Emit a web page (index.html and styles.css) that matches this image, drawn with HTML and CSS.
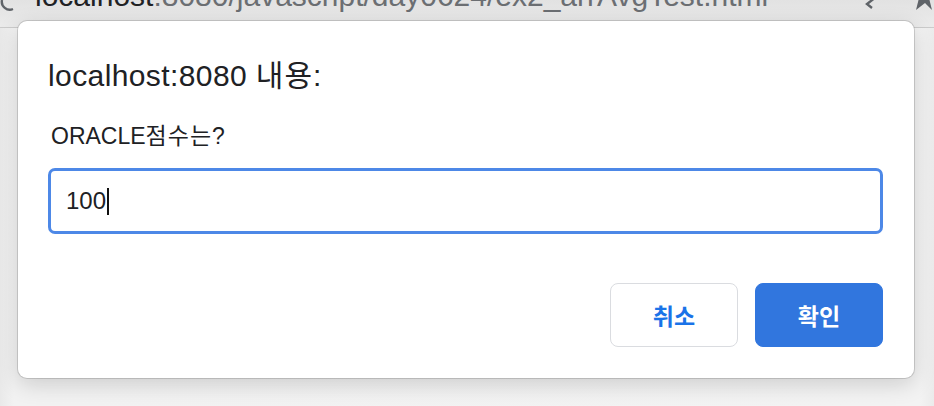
FILE: index.html
```html
<!DOCTYPE html>
<html lang="ko">
<head>
<meta charset="utf-8">
<title>prompt</title>
<link rel="stylesheet" href="styles.css">
</head>
<body>
<div class="toolbar">
  <svg class="reload" width="16" height="12" viewBox="0 0 16 12"><path d="M2 0 A8 8 0 0 0 13 9" fill="none" stroke="#5f6368" stroke-width="2.4"/></svg>
  <div class="url"><span class="host">localhost</span><span class="path">:8080/javascript/day0624/ex2_arrAvgTest.html</span></div>
  <div class="tools">
    <svg class="ico-key" width="16" height="12" viewBox="0 0 16 12"><path d="M13 0 L4 7 L9 11" fill="none" stroke="#5f6368" stroke-width="2.4"/></svg>
    <svg class="ico-star" width="16" height="14" viewBox="0 0 16 14"><path d="M3 0 L0 12 L9 5 L16 12 L13 0 Z" fill="#5f6368"/></svg>
  </div>
</div>
<div class="page"></div>

<div class="dialog" role="dialog">
  <div class="title">localhost:8080 <span class="ko">내용</span>:</div>
  <div class="message">ORACLE<span class="ko">점수는</span>?</div>
  <div class="field"><span class="value">100</span><span class="caret"></span></div>
  <div class="actions">
    <button class="btn btn-cancel">취소</button>
    <button class="btn btn-ok">확인</button>
  </div>
</div>
</body>
</html>
```

FILE: styles.css
```css
html, body {
  margin: 0;
  padding: 0;
}
body {
  width: 934px;
  height: 406px;
  overflow: hidden;
  background: #f1f1f1;
  font-family: "Liberation Sans", "Noto Sans CJK KR", sans-serif;
  position: relative;
}
.toolbar {
  height: 28px;
  box-sizing: border-box;
  border-bottom: 1px solid #cbcbcb;
  background: linear-gradient(#e2e2e2, #ebebeb);
  display: flex;
  align-items: flex-start;
  overflow: hidden;
}
.reload {
  flex: none;
  margin-top: 0;
}
.url {
  margin-left: 19px;
  margin-top: -21px;
  font-size: 30px;
  line-height: 34px;
  white-space: nowrap;
}
.host { color: #202124; }
.path { color: #6b6e72; }
.tools {
  margin-left: auto;
  display: flex;
  gap: 37px;
  padding-right: 2px;
}
.ico-key { margin-top: -3px; }
.ico-star { margin-top: -2px; }
.page {
  height: 378px;
  background: linear-gradient(90deg, #e9e9e9 0, #f2f2f2 14px, #f3f3f3 920px, #ebebeb 934px);
}
.dialog {
  position: absolute;
  left: 18px;
  top: 21px;
  width: 896px;
  height: 357px;
  box-sizing: border-box;
  background: #fff;
  border-radius: 9px;
  box-shadow: 0 0 0 1px rgba(0,0,0,0.14), 0 6px 22px rgba(0,0,0,0.16);
  padding: 38px 31px 31px 30px;
  display: flex;
  flex-direction: column;
  color: #202124;
}
.title {
  font-size: 30px;
  line-height: 34px;
  letter-spacing: 0.4px;
}
.title .ko {
  letter-spacing: 1px;
}
.message {
  margin-top: 29px;
  margin-left: 3px;
  font-size: 23px;
  line-height: 28px;
}
.message .ko {
  letter-spacing: 1px;
}
.field {
  margin-top: 18px;
  height: 66px;
  box-sizing: border-box;
  border: 3px solid #4d88e7;
  border-radius: 7px;
  display: flex;
  align-items: center;
  padding-left: 15px;
  font-size: 24px;
}
.value { color: #202124; }
.caret {
  width: 2px;
  height: 27px;
  background: #111;
  margin-left: 1px;
}
.actions {
  margin-top: auto;
  display: flex;
  justify-content: flex-end;
  gap: 17px;
}
.btn {
  width: 128px;
  height: 64px;
  box-sizing: border-box;
  border-radius: 8px;
  font-family: "Noto Sans CJK KR", sans-serif;
  font-size: 23px;
  font-weight: 600;
  cursor: pointer;
}
.btn-cancel {
  background: #fff;
  border: 1px solid #dadce0;
  color: #1a73e8;
}
.btn-ok {
  background: #3176de;
  border: 1px solid #3176de;
  color: #fff;
}
```
